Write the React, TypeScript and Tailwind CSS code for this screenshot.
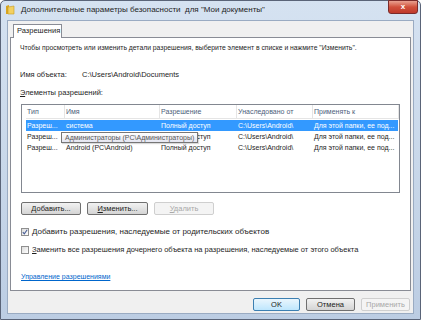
import React from 'react';

const cols = [
  { label: 'Тип', w: 'w-[39px]' },
  { label: 'Имя', w: 'w-[95px]' },
  { label: 'Разрешение', w: 'w-[77px]' },
  { label: 'Унаследовано от', w: 'w-[76px]' },
  { label: 'Применять к', w: 'flex-1' },
];

const rows = [
  ['Разреш...', 'система', 'Полный доступ', 'C:\\Users\\Android\\', 'Для этой папки, ее под...'],
  ['Разреш...', 'Администраторы (PC\\Администраторы)', 'Полный доступ', 'C:\\Users\\Android\\', 'Для этой папки, ее под...'],
  ['Разреш...', 'Android (PC\\Android)', 'Полный доступ', 'C:\\Users\\Android\\', 'Для этой папки, ее под...'],
];

function FolderIcon() {
  return (
    <svg width="10" height="11" viewBox="0 0 10 11">
      <path d="M1 2 L4 1 L4 10 L1 10 Z" fill="#d9a520" />
      <path d="M3 3 L9 2 L9 10 L3 10 Z" fill="#f3d060" stroke="#c79a20" strokeWidth="0.6" />
    </svg>
  );
}

function Btn({ children, disabled, focused, w }: { children: React.ReactNode; disabled?: boolean; focused?: boolean; w: string }) {
  return (
    <div
      className={`${w} h-[13px] flex items-center justify-center rounded-[2px] border text-[7.5px] ${
        disabled
          ? 'border-[#cfcfcf] bg-[#f4f4f4] text-[#a8a8a8]'
          : focused
          ? 'border-[#3c7fb1] bg-gradient-to-b from-[#eaf6fd] to-[#bee6fd] text-[#222]'
          : 'border-[#707070] bg-gradient-to-b from-[#f2f2f2] to-[#d4d4d4] text-[#222]'
      }`}
    >
      {children}
    </div>
  );
}

export default function App() {
  return (
    <div className="w-[424px] h-[336px] bg-white overflow-hidden" style={{ fontFamily: '"Liberation Sans", Arial, sans-serif' }}>
      <div className="w-[421px] h-[320px] rounded-t-[5px] border border-[#5a6478] bg-gradient-to-b from-[#d5e2f1] via-[#c9d8ea] to-[#bccde3] flex flex-col">
        {/* title bar */}
        <div className="h-[19px] flex items-start shrink-0">
          <div className="ml-[4px] mt-[3px]">
            <FolderIcon />
          </div>
          <div className="ml-[6px] mt-[3px] text-[8px] leading-[12px] text-[#1e1e1e] whitespace-nowrap">
            Дополнительные параметры безопасности&nbsp; для "Мои документы"
          </div>
          <div className="ml-auto mr-[2px] -mt-px w-[30px] h-[14px] rounded-b-[3px] border border-[#7a2a2a] bg-gradient-to-b from-[#e8a090] via-[#d0503c] to-[#c0392b] flex items-center justify-center text-white text-[8px] font-bold leading-none">
            x
          </div>
        </div>

        {/* client area */}
        <div className="flex-1 mx-[6px] mb-[5px] bg-[#f0f0f0] border border-[#9aabc2] flex flex-col px-[2px]">
          {/* tab */}
          <div className="ml-[3px] mt-[3px] w-[49px] h-[14px] border border-b-0 border-[#898c95] bg-white text-[7.5px] leading-[12px] pl-[3px] text-[#1e1e1e] relative z-10 -mb-px">
            Разрешения
          </div>
          <div className="h-[254px] border border-[#898c95] bg-white px-[9px] flex flex-col text-[7.5px] text-[#1e1e1e]">
            <div className="mt-[4px] leading-[12px] whitespace-nowrap text-[6.8px]">
              Чтобы просмотреть или изменить детали разрешения, выберите элемент в списке и нажмите "Изменить".
            </div>
            <div className="mt-[15px] leading-[12px] flex whitespace-nowrap">
              <span className="w-[62px]">Имя объекта:</span>
              <span>C:\Users\Android\Documents</span>
            </div>
            <div className="mt-[6px] leading-[12px]">
              <span className="underline">Э</span>лементы разрешений:
            </div>
            {/* list */}
            <div className="mt-[5px] ml-px mr-px h-[89px] border border-[#828790] bg-white flex flex-col pl-[4px] relative text-[7px]">
              <div className="h-[14px] flex border-b border-[#e5e5e5] text-[#4c607a]">
                {cols.map((c, i) => (
                  <div key={i} className={`${c.w} pl-px leading-[14px] border-r border-[#e5e5e5] whitespace-nowrap`}>
                    {c.label}
                  </div>
                ))}
              </div>
              <div className="mt-px flex flex-col">
                {rows.map((r, ri) => (
                  <div key={ri} className={`h-[11px] flex leading-[11px] mr-[1px] ${ri === 0 ? 'bg-[#3399ff] text-white' : ''}`}>
                    {r.map((v, ci) => (
                      <div key={ci} className={`${cols[ci].w} pl-px whitespace-nowrap overflow-hidden`}>
                        {ri === 1 && ci === 1 ? '' : v}
                      </div>
                    ))}
                  </div>
                ))}
              </div>
              {/* tooltip */}
              <div className="absolute left-[39px] top-[27px] h-[11px] px-[3px] border border-[#767676] bg-gradient-to-b from-white to-[#e4e5f0] text-[#575757] leading-[9px] whitespace-nowrap shadow-[1px_1px_1px_rgba(0,0,0,0.15)]">
                Администраторы (PC\Администраторы)
              </div>
            </div>
            {/* buttons */}
            <div className="mt-[9px] ml-[1px] flex gap-[6px]">
              <Btn w="w-[60px]">
                <span><span className="underline">Д</span>обавить...</span>
              </Btn>
              <Btn w="w-[61px]">
                <span><span className="underline">И</span>зменить...</span>
              </Btn>
              <Btn w="w-[60px]" disabled>
                <span><span className="underline">У</span>далить</span>
              </Btn>
            </div>
            {/* checkboxes */}
            <div className="mt-[11px] ml-[1px] flex items-center gap-[3px] leading-[12px] whitespace-nowrap">
              <div className="w-[8px] h-[8px] border border-[#8f8f8f] bg-gradient-to-br from-[#dcdcdc] to-white flex items-center justify-center">
                <svg width="6" height="6" viewBox="0 0 6 6">
                  <path d="M0.8 3.2 L2.3 4.8 L5.2 0.8" fill="none" stroke="#4a5f97" strokeWidth="1.1" />
                </svg>
              </div>
              <span className="text-[8px]">Добавить разрешения, наследуемые от родительских объектов</span>
            </div>
            <div className="mt-[6px] ml-[1px] flex items-center gap-[3px] leading-[12px] whitespace-nowrap">
              <div className="w-[8px] h-[8px] border border-[#8f8f8f] bg-gradient-to-br from-[#dcdcdc] to-white" />
              <span>
                <span className="underline">З</span>аменить все разрешения дочернего объекта на разрешения, наследуемые от этого объекта
              </span>
            </div>
            <div className="mt-[15px] ml-[1px] leading-[12px] text-[#0066cc] underline whitespace-nowrap text-[7px]">
              Управление разрешениями
            </div>
          </div>
          {/* bottom buttons */}
          <div className="mt-[7px] flex justify-end gap-[6px] mr-[1px]">
            <Btn w="w-[47px]" focused>
              OK
            </Btn>
            <Btn w="w-[49px]">Отмена</Btn>
            <Btn w="w-[49px]" disabled>
              Применить
            </Btn>
          </div>
        </div>
      </div>
    </div>
  );
}
